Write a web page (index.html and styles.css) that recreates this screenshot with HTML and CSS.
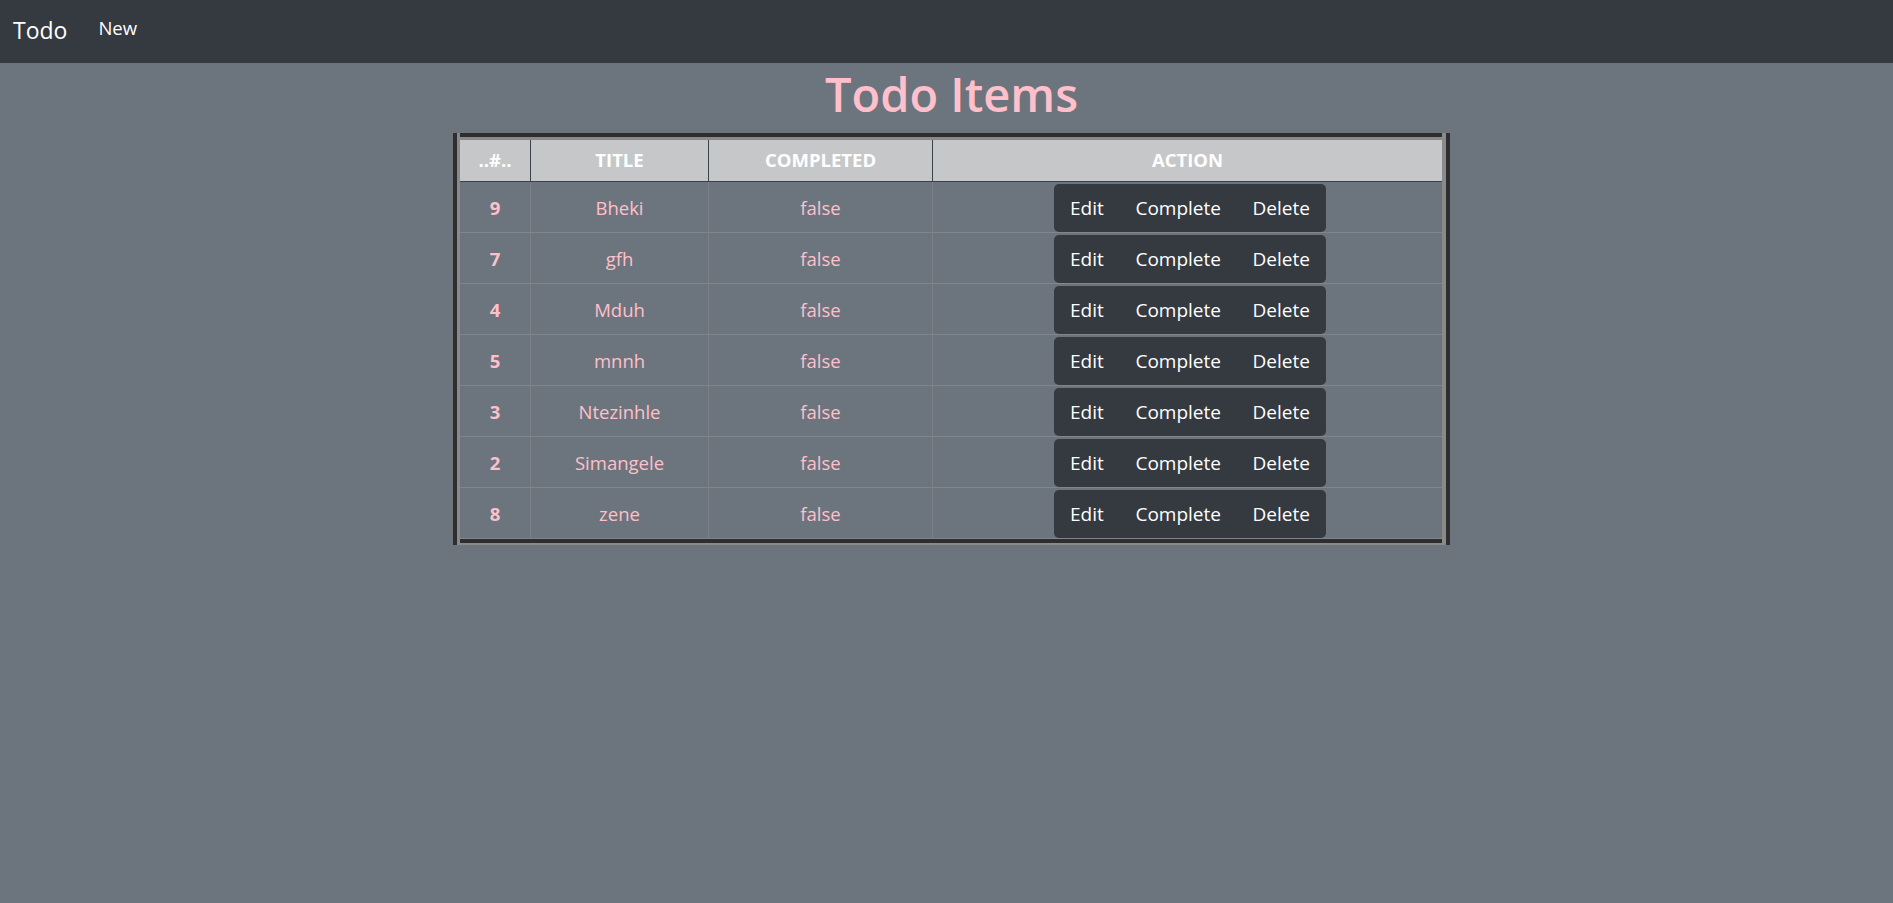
FILE: index.html
```html
<!DOCTYPE html>
<html lang="en">
<head>
<meta charset="utf-8">
<title>Todo</title>
<link rel="stylesheet" href="styles.css">
</head>
<body>
<nav class="navbar">
  <a class="brand" href="#">Todo</a>
  <a class="nav-link" href="#">New</a>
</nav>
<main class="main">
  <h1 class="title">Todo Items</h1>
  <div class="frame">
    <div class="tbl-wrap">
      <div class="grid head">
        <div class="hcell">..#..</div>
        <div class="hcell">TITLE</div>
        <div class="hcell">COMPLETED</div>
        <div class="hcell last">ACTION</div>
      </div>
      <div class="grid row">
        <div class="cell id">9</div><div class="cell">Bheki</div><div class="cell">false</div>
        <div class="cell action last"><div class="btn-group"><span class="btn">Edit</span><span class="btn">Complete</span><span class="btn">Delete</span></div></div>
      </div>
      <div class="grid row">
        <div class="cell id">7</div><div class="cell">gfh</div><div class="cell">false</div>
        <div class="cell action last"><div class="btn-group"><span class="btn">Edit</span><span class="btn">Complete</span><span class="btn">Delete</span></div></div>
      </div>
      <div class="grid row">
        <div class="cell id">4</div><div class="cell">Mduh</div><div class="cell">false</div>
        <div class="cell action last"><div class="btn-group"><span class="btn">Edit</span><span class="btn">Complete</span><span class="btn">Delete</span></div></div>
      </div>
      <div class="grid row">
        <div class="cell id">5</div><div class="cell">mnnh</div><div class="cell">false</div>
        <div class="cell action last"><div class="btn-group"><span class="btn">Edit</span><span class="btn">Complete</span><span class="btn">Delete</span></div></div>
      </div>
      <div class="grid row">
        <div class="cell id">3</div><div class="cell">Ntezinhle</div><div class="cell">false</div>
        <div class="cell action last"><div class="btn-group"><span class="btn">Edit</span><span class="btn">Complete</span><span class="btn">Delete</span></div></div>
      </div>
      <div class="grid row">
        <div class="cell id">2</div><div class="cell">Simangele</div><div class="cell">false</div>
        <div class="cell action last"><div class="btn-group"><span class="btn">Edit</span><span class="btn">Complete</span><span class="btn">Delete</span></div></div>
      </div>
      <div class="grid row">
        <div class="cell id">8</div><div class="cell">zene</div><div class="cell">false</div>
        <div class="cell action last"><div class="btn-group"><span class="btn">Edit</span><span class="btn">Complete</span><span class="btn">Delete</span></div></div>
      </div>
    </div>
  </div>
</main>
</body>
</html>
```

FILE: styles.css
```css
* { box-sizing: border-box; }

html, body {
  margin: 0;
  padding: 0;
}

body {
  min-height: 903px;
  background: #6c757d;
  font-family: "Segoe UI", "Open Sans", "Noto Sans", sans-serif;
  font-size: 19px;
  color: #fff;
}

.navbar {
  height: 63px;
  background: #343a40;
  display: flex;
  align-items: flex-start;
  padding: 12px 0 0 13px;
}

.brand {
  color: #fff;
  text-decoration: none;
  font-size: 23px;
  line-height: 36px;
  margin-right: 22px;
}

.nav-link {
  color: #fff;
  text-decoration: none;
  font-size: 18.5px;
  line-height: 28px;
  margin-top: 2px;
  padding: 0 9px;
}

.main {
  padding-left: 10px;
  display: flex;
  flex-direction: column;
  align-items: center;
}

.title {
  margin: 3px 0 10px;
  font-size: 47px;
  line-height: 57px;
  font-weight: 600;
  color: #ffc0cb;
}

.frame {
  border-left: 4px solid #2e2e2e;
  border-right: 4px solid #2e2e2e;
  background: #8a8a8a;
  padding: 0 4px 2px 3px;
}

.tbl-wrap {
  border-top: 4px solid #2e2e2e;
  border-bottom: 4px solid #2e2e2e;
  padding-top: 3px;
  background: #8a8a8a;
}

.grid {
  display: grid;
  grid-template-columns: 71px 178px 224px 509px;
}

.head {
  background: #c6c7c8;
  height: 42px;
  border-bottom: 1px solid #3b4148;
}

.hcell {
  border-right: 1px solid #3b4148;
  display: flex;
  align-items: center;
  justify-content: center;
  font-weight: 700;
  font-size: 18.5px;
  color: #fff;
  padding-bottom: 3px;
}

.hcell.last { border-right: none; }

.row {
  background: #6c757d;
}

.cell {
  height: 51px;
  border-right: 1px solid #7b8187;
  border-bottom: 1px solid #80868c;
  display: flex;
  align-items: center;
  justify-content: center;
  color: #ffc0cb;
  font-size: 18.5px;
}

.cell.id { font-weight: 700; }

.cell.last { border-right: none; }

.cell.action {
  align-items: flex-start;
  padding-top: 2px;
  padding-left: 5px;
}

.btn-group {
  display: flex;
  height: 48px;
  background: #343a40;
  border-radius: 5px;
}

.btn {
  display: flex;
  align-items: center;
  padding: 0 15.8px;
  color: #fff;
  font-size: 19px;
}
```
